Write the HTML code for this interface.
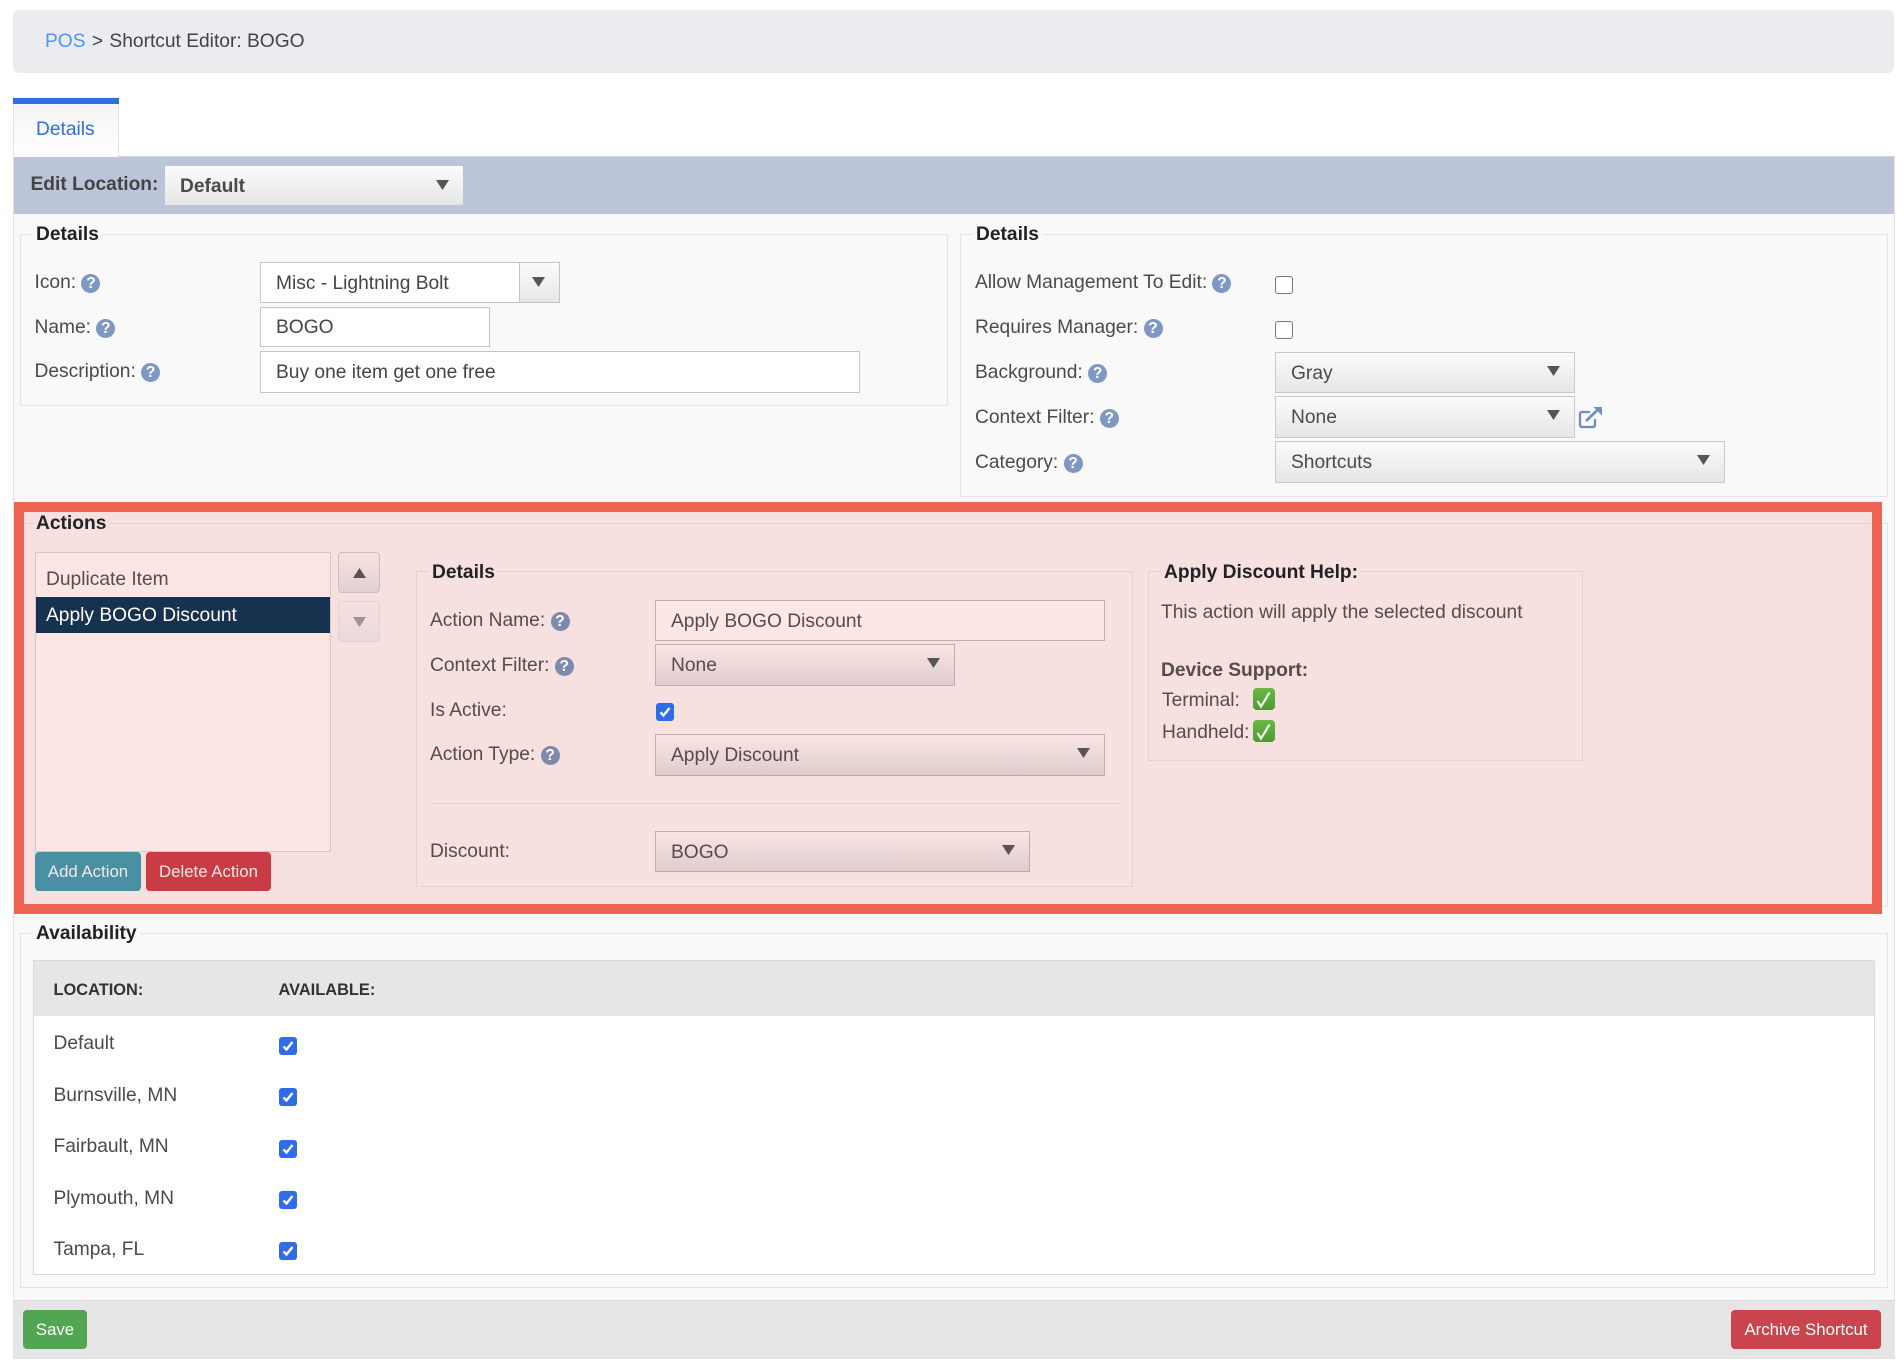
<!DOCTYPE html>
<html><head><meta charset="utf-8"><title>Shortcut Editor: BOGO</title>
<style>
*{box-sizing:border-box}
html,body{margin:0;padding:0;background:#fff}
body{width:1904px;height:1370px;position:relative;overflow:hidden;font-family:"Liberation Sans",Arial,sans-serif;font-size:19.2px;color:#4a4a4a}
div,span.a{position:absolute}
.t{position:absolute;white-space:nowrap;line-height:22.500px;height:23px}
.p{color:#574b4b}
.lg{position:absolute;white-space:nowrap;line-height:22.500px;height:20px;font-weight:bold;color:#222;padding:0 3px;margin-left:-3px}
.fs{position:absolute;border:1px solid #e2e4e9}
.fp{position:absolute;border:1px solid #e2d0d3}
.q{display:inline-block;width:19px;height:19px;border-radius:50%;background:#7f98c3;color:#fff;font-size:15.500px;font-weight:bold;line-height:19px;text-align:center;vertical-align:0px;margin-left:0}
.qp{background:#7d89ad}
.in{position:absolute;background:#fff;border:1px solid #c4c4c4;padding-left:15px;padding-top:1px;white-space:nowrap;color:#444}
.se{position:absolute;background:linear-gradient(#fbfbfb,#e6e6e6);border:1px solid #c8c8c8;padding-left:15px;padding-top:1px;white-space:nowrap;color:#4a4a4a}
.ip{position:absolute;background:#fce6e6;border:1px solid #c0acb0;padding-left:15px;padding-top:1px;white-space:nowrap;color:#574b4b}
.sp{position:absolute;background:linear-gradient(#fbe5e5,#e0cccd);border:1px solid #c0acb0;padding-left:15px;padding-top:1px;white-space:nowrap;color:#574b4b}
.ar{position:absolute;right:14px;top:13px;width:13px;height:10px;background:#555;clip-path:polygon(0 0,100% 0,50% 100%)}
.cb{position:absolute;width:18px;height:18px;border-radius:3px;background:#316ce8}
.cb svg{position:absolute;left:0;top:0}
.cu{position:absolute;width:18px;height:18px;border-radius:3px;background:#fff;border:1.500px solid #767676}
.b{position:absolute;border-radius:4px;color:#fff;text-align:center;font-size:16.800px;line-height:39px;height:39px;white-space:nowrap}
</style></head><body>

<div style="left:13px;top:10px;width:1881px;height:63px;background:#ebecf0;border-radius:6px"></div>
<div class="t" style="left:45px;top:30.500px"><span style="color:#4d94ff">POS</span> <span style="color:#444;margin-left:1px">&gt;<span style="margin-left:1px"> Shortcut Editor: BOGO</span></span></div>

<!-- panel -->
<div style="left:13px;top:157px;width:1882px;height:1202px;background:#f9f9f9;border-left:1px solid #e2e2e2;border-right:1px solid #e2e2e2"></div>
<div style="left:13px;top:156px;width:1882px;height:1px;background:#cfd3dc"></div>

<!-- tab -->
<div style="left:13px;top:97px;width:106px;height:61px;background:linear-gradient(#f3f3f3,#fff);border-left:1px solid #e2e2e2;border-right:1px solid #e2e2e2"></div>
<div style="left:13px;top:98px;width:106px;height:6px;background:#2f6ee0"></div>
<div class="t" style="left:36px;top:119px;color:#2f6ee0">Details</div>

<!-- location band -->
<div style="left:14px;top:157px;width:1880px;height:57px;background:#bbc4d8"></div>
<div class="t" style="left:30.500px;top:174px;font-weight:bold;color:#444">Edit Location:</div>
<div class="se" style="left:165px;top:166px;width:298px;height:39px;line-height:39px;font-weight:bold;border:0">Default<div class="ar" style="top:14px;right:14px"></div></div>

<!-- details left -->
<div class="fs" style="left:20px;top:234px;width:928px;height:172px"></div>
<div class="lg" style="left:36px;top:224px;background:#f9f9f9">Details</div>
<div class="t" style="left:34.500px;top:272px">Icon: <span class="q">?</span></div>
<div class="t" style="left:34.500px;top:317px">Name: <span class="q">?</span></div>
<div class="t" style="left:34.500px;top:361px">Description: <span class="q">?</span></div>
<div class="in" style="left:260px;top:262px;width:300px;height:41px;line-height:39px">Misc - Lightning Bolt
  <div style="left:258px;top:0;width:40px;height:39px;background:linear-gradient(#fbfbfb,#e6e6e6);border-left:1px solid #c4c4c4"><div class="ar" style="right:14px;top:14px"></div></div></div>
<div class="in" style="left:260px;top:307px;width:230px;height:40px;line-height:38px">BOGO</div>
<div class="in" style="left:260px;top:351px;width:600px;height:42px;line-height:40px">Buy one item get one free</div>

<!-- details right -->
<div class="fs" style="left:960px;top:234px;width:928px;height:263px"></div>
<div class="lg" style="left:976px;top:224px;background:#f9f9f9">Details</div>
<div class="t" style="left:975px;top:272px">Allow Management To Edit: <span class="q">?</span></div>
<div class="t" style="left:975px;top:317px">Requires Manager: <span class="q">?</span></div>
<div class="t" style="left:975px;top:362px">Background: <span class="q">?</span></div>
<div class="t" style="left:975px;top:407px">Context Filter: <span class="q">?</span></div>
<div class="t" style="left:975px;top:452px">Category: <span class="q">?</span></div>
<div class="cu" style="left:1275px;top:276px"></div>
<div class="cu" style="left:1275px;top:321px"></div>
<div class="se" style="left:1275px;top:352px;width:300px;height:41px;line-height:39px">Gray<div class="ar"></div></div>
<div class="se" style="left:1275px;top:396px;width:300px;height:42px;line-height:40px">None<div class="ar"></div></div>
<svg style="position:absolute;left:1578px;top:406px" width="26" height="23" viewBox="0 0 26 23"><path d="M17 13v6a2 2 0 0 1-2 2H4a2 2 0 0 1-2-2V8a2 2 0 0 1 2-2h8" fill="none" stroke="#6d8cc0" stroke-width="2.300"/><path d="M8 15L19 4.500" fill="none" stroke="#6d8cc0" stroke-width="2.600"/><path d="M15.500 1h8.500v8.500z" fill="#6d8cc0"/></svg>
<div class="se" style="left:1275px;top:441px;width:450px;height:42px;line-height:40px">Shortcuts<div class="ar"></div></div>

<!-- outer actions fieldset edge -->
<div class="fs" style="left:20px;top:523px;width:1868px;height:384px"></div>

<!-- red highlighted -->
<div style="left:14px;top:502px;width:1868px;height:412px;background:#f6e0e0;border:10px solid #ee6352"></div>
<div style="left:24px;top:523px;width:1848px;height:1px;background:#e2d0d3"></div>
<div class="lg" style="left:36px;top:513px;background:#f6e0e0">Actions</div>

<div style="left:35px;top:552px;width:296px;height:300px;background:#fbe5e5;border:1px solid #d9c3c6"></div>
<div class="t p" style="left:46px;top:569px">Duplicate Item</div>
<div style="left:36px;top:597px;width:294px;height:36px;background:#17324f"></div>
<div class="t" style="left:46px;top:605px;color:#fff">Apply BOGO Discount</div>

<div style="left:338px;top:552px;width:42px;height:41px;background:linear-gradient(#f8e2e2,#e2d0d1);border:1px solid #cfbcbf;border-radius:4px"><div style="left:14px;top:15px;width:13px;height:10px;background:#5c504f;clip-path:polygon(50% 0,100% 100%,0 100%)"></div></div>
<div style="left:338px;top:601px;width:42px;height:41px;background:linear-gradient(#f6e0e0,#ebd9da);border:1px solid #e2d2d4;border-radius:4px"><div style="left:14px;top:15px;width:13px;height:10px;background:#a29293;clip-path:polygon(0 0,100% 0,50% 100%)"></div></div>

<div class="b" style="left:35px;top:852px;width:106px;background:#4a90a4;color:#f3e8ea">Add Action</div>
<div class="b" style="left:146px;top:852px;width:125px;background:#c93c44;color:#fbe5e5">Delete Action</div>

<div class="fp" style="left:416px;top:571px;width:717px;height:316px"></div>
<div class="lg" style="left:432px;top:562px;background:#f6e0e0">Details</div>
<div class="t p" style="left:430px;top:610px">Action Name: <span class="q qp">?</span></div>
<div class="t p" style="left:430px;top:655px">Context Filter: <span class="q qp">?</span></div>
<div class="t p" style="left:430px;top:700px">Is Active:</div>
<div class="t p" style="left:430px;top:744px">Action Type: <span class="q qp">?</span></div>
<div class="t p" style="left:430px;top:841px">Discount:</div>
<div class="ip" style="left:655px;top:600px;width:450px;height:41px;line-height:39px">Apply BOGO Discount</div>
<div class="sp" style="left:655px;top:644px;width:300px;height:42px;line-height:40px">None<div class="ar"></div></div>
<div class="cb" style="left:656px;top:703px"><svg width="18" height="18" viewBox="0 0 18 18"><path d="M4.500 9.500l3 3 6-7.500" fill="none" stroke="#fff" stroke-width="2.400"/></svg></div>
<div class="sp" style="left:655px;top:734px;width:450px;height:42px;line-height:40px">Apply Discount<div class="ar"></div></div>
<div style="left:430px;top:803px;width:689px;height:1px;background:#e2d0d3"></div>
<div class="sp" style="left:655px;top:831px;width:375px;height:41px;line-height:39px">BOGO<div class="ar"></div></div>

<div class="fp" style="left:1148px;top:571px;width:435px;height:190px"></div>
<div class="lg" style="left:1164px;top:562px;background:#f6e0e0">Apply Discount Help:</div>
<div class="t p" style="left:1161px;top:602px">This action will apply the selected discount</div>
<div class="t p" style="left:1161px;top:660px;font-weight:bold">Device Support:</div>
<div class="t p" style="left:1162px;top:690px">Terminal:</div>
<div class="t p" style="left:1162px;top:722px">Handheld:</div>
<svg style="position:absolute;left:1253px;top:688px" width="22" height="22" viewBox="0 0 22 22"><defs><linearGradient id="g" x1="0" y1="0" x2="0" y2="1"><stop offset="0" stop-color="#6fb84a"/><stop offset="1" stop-color="#4a9c30"/></linearGradient></defs><rect width="22" height="22" rx="4" fill="url(#g)"/><path d="M4.500 13l3.500 5.500L16.500 4.500" fill="none" stroke="#f2f8ea" stroke-width="2.200"/></svg>
<svg style="position:absolute;left:1253px;top:720px" width="22" height="22" viewBox="0 0 22 22"><rect width="22" height="22" rx="4" fill="url(#g)"/><path d="M4.500 13l3.500 5.500L16.500 4.500" fill="none" stroke="#f2f8ea" stroke-width="2.200"/></svg>

<!-- availability -->
<div class="fs" style="left:20px;top:933px;width:1868px;height:355px"></div>
<div class="lg" style="left:36px;top:923px;background:#f9f9f9">Availability</div>
<div style="left:33px;top:960px;width:1842px;height:315px;background:#fff;border:1px solid #d9d9d9"></div>
<div style="left:34px;top:961px;width:1840px;height:55px;background:#e6e6e6"></div>
<div class="t" style="left:53.500px;top:979px;font-weight:bold;font-size:16.400px;color:#333">LOCATION:</div>
<div class="t" style="left:278.500px;top:979px;font-weight:bold;font-size:16.400px;color:#333">AVAILABLE:</div>
<div class="t" style="left:53.500px;top:1033px">Default</div>
<div class="t" style="left:53.500px;top:1085px">Burnsville, MN</div>
<div class="t" style="left:53.500px;top:1136px">Fairbault, MN</div>
<div class="t" style="left:53.500px;top:1188px">Plymouth, MN</div>
<div class="t" style="left:53.500px;top:1239px">Tampa, FL</div>
<div class="cb" style="left:279px;top:1037px"><svg width="18" height="18" viewBox="0 0 18 18"><path d="M4.500 9.500l3 3 6-7.500" fill="none" stroke="#fff" stroke-width="2.400"/></svg></div>
<div class="cb" style="left:279px;top:1088px"><svg width="18" height="18" viewBox="0 0 18 18"><path d="M4.500 9.500l3 3 6-7.500" fill="none" stroke="#fff" stroke-width="2.400"/></svg></div>
<div class="cb" style="left:279px;top:1140px"><svg width="18" height="18" viewBox="0 0 18 18"><path d="M4.500 9.500l3 3 6-7.500" fill="none" stroke="#fff" stroke-width="2.400"/></svg></div>
<div class="cb" style="left:279px;top:1191px"><svg width="18" height="18" viewBox="0 0 18 18"><path d="M4.500 9.500l3 3 6-7.500" fill="none" stroke="#fff" stroke-width="2.400"/></svg></div>
<div class="cb" style="left:279px;top:1242px"><svg width="18" height="18" viewBox="0 0 18 18"><path d="M4.500 9.500l3 3 6-7.500" fill="none" stroke="#fff" stroke-width="2.400"/></svg></div>

<!-- footer -->
<div style="left:13px;top:1300px;width:1882px;height:59px;background:#e5e5e5;border-top:1px solid #d9d9d9"></div>
<div class="b" style="left:23px;top:1310px;width:64px;background:#52a552">Save</div>
<div class="b" style="left:1731px;top:1310px;width:150px;background:#c9444c">Archive Shortcut</div>

</body></html>
